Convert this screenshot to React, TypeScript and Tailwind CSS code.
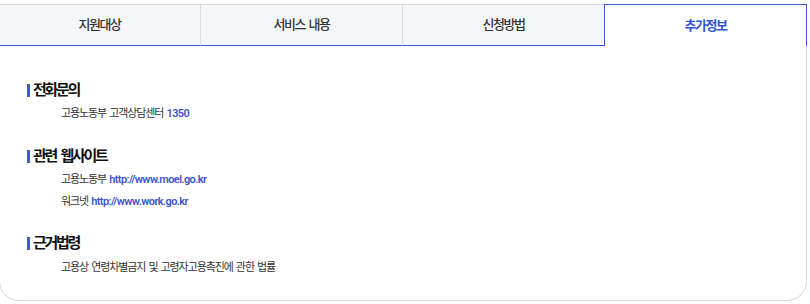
import React from "react";

const font = { fontFamily: "Roboto, 'Noto Sans CJK KR', sans-serif" };

function Title({ children }: { children: React.ReactNode }) {
  return (
    <div className="flex items-center h-[20px]">
      <span className="w-[3px] h-[13px] bg-[#3a5bd9]" />
      <span className="ml-[3px] text-[15px] font-bold text-[#111] tracking-[-2.3px] [word-spacing:3px] leading-[20px]">{children}</span>
    </div>
  );
}

function Item({ children }: { children: React.ReactNode }) {
  return (
    <div className="pl-[34px] text-[11px] leading-[22px] text-[#333] tracking-[-1.1px] [word-spacing:1.5px]">{children}</div>
  );
}

function Link({ children }: { children: React.ReactNode }) {
  return <span className="text-[#3c55cc] font-semibold tracking-[-0.6px] [word-spacing:0px]">{children}</span>;
}

export default function App() {
  const tabs = ["지원대상", "서비스 내용", "신청방법", "추가정보"];
  return (
    <div className="bg-white w-[810px] h-[304px] overflow-hidden" style={font}>
      <div className="pt-1 -ml-px w-[808px]">
        <div className="flex h-[42px] border-t border-[#dcdcdc]">
          {tabs.map((t, i) => {
            const active = i === 3;
            return (
              <div
                key={t}
                className={
                  active
                    ? "flex-1 flex items-center justify-center bg-white border-l border-r border-t border-[#3a5bd9] -mt-px text-[13px] font-bold text-[#2f54d4] tracking-[-1.5px]"
                    : i === 0
                    ? "flex-1 flex items-center justify-center bg-[#f5f6fa] border-b border-[#3a5bd9] text-[13px] text-[#333] tracking-[-1.5px] [word-spacing:2px] font-medium"
                    : "flex-1 flex items-center justify-center bg-[#f5f6fa] border-b border-[#3a5bd9] border-l border-l-[#dcdcdc] text-[13px] text-[#333] tracking-[-1.5px] [word-spacing:2px] font-medium"
                }
              >
                {t}
              </div>
            );
          })}
        </div>
        <div className="border-l border-r border-b border-[#dcdcdc] rounded-b-[20px] pt-[34px] pb-[21px] pl-[27px]">
          <Title>전화문의</Title>
          <div className="mt-[3px]">
            <Item>
              고용노동부 고객상담센터 <Link>1350</Link>
            </Item>
          </div>
          <div className="mt-[21px]">
            <Title>관련 웹사이트</Title>
          </div>
          <div className="mt-[3px]">
            <Item>
              고용노동부 <Link>http://www.moel.go.kr</Link>
            </Item>
            <Item>
              워크넷 <Link>http://www.work.go.kr</Link>
            </Item>
          </div>
          <div className="mt-[20px]">
            <Title>근거법령</Title>
          </div>
          <div className="mt-[4px]">
            <Item>고용상 연령차별금지 및 고령자고용촉진에 관한 법률</Item>
          </div>
        </div>
      </div>
    </div>
  );
}
